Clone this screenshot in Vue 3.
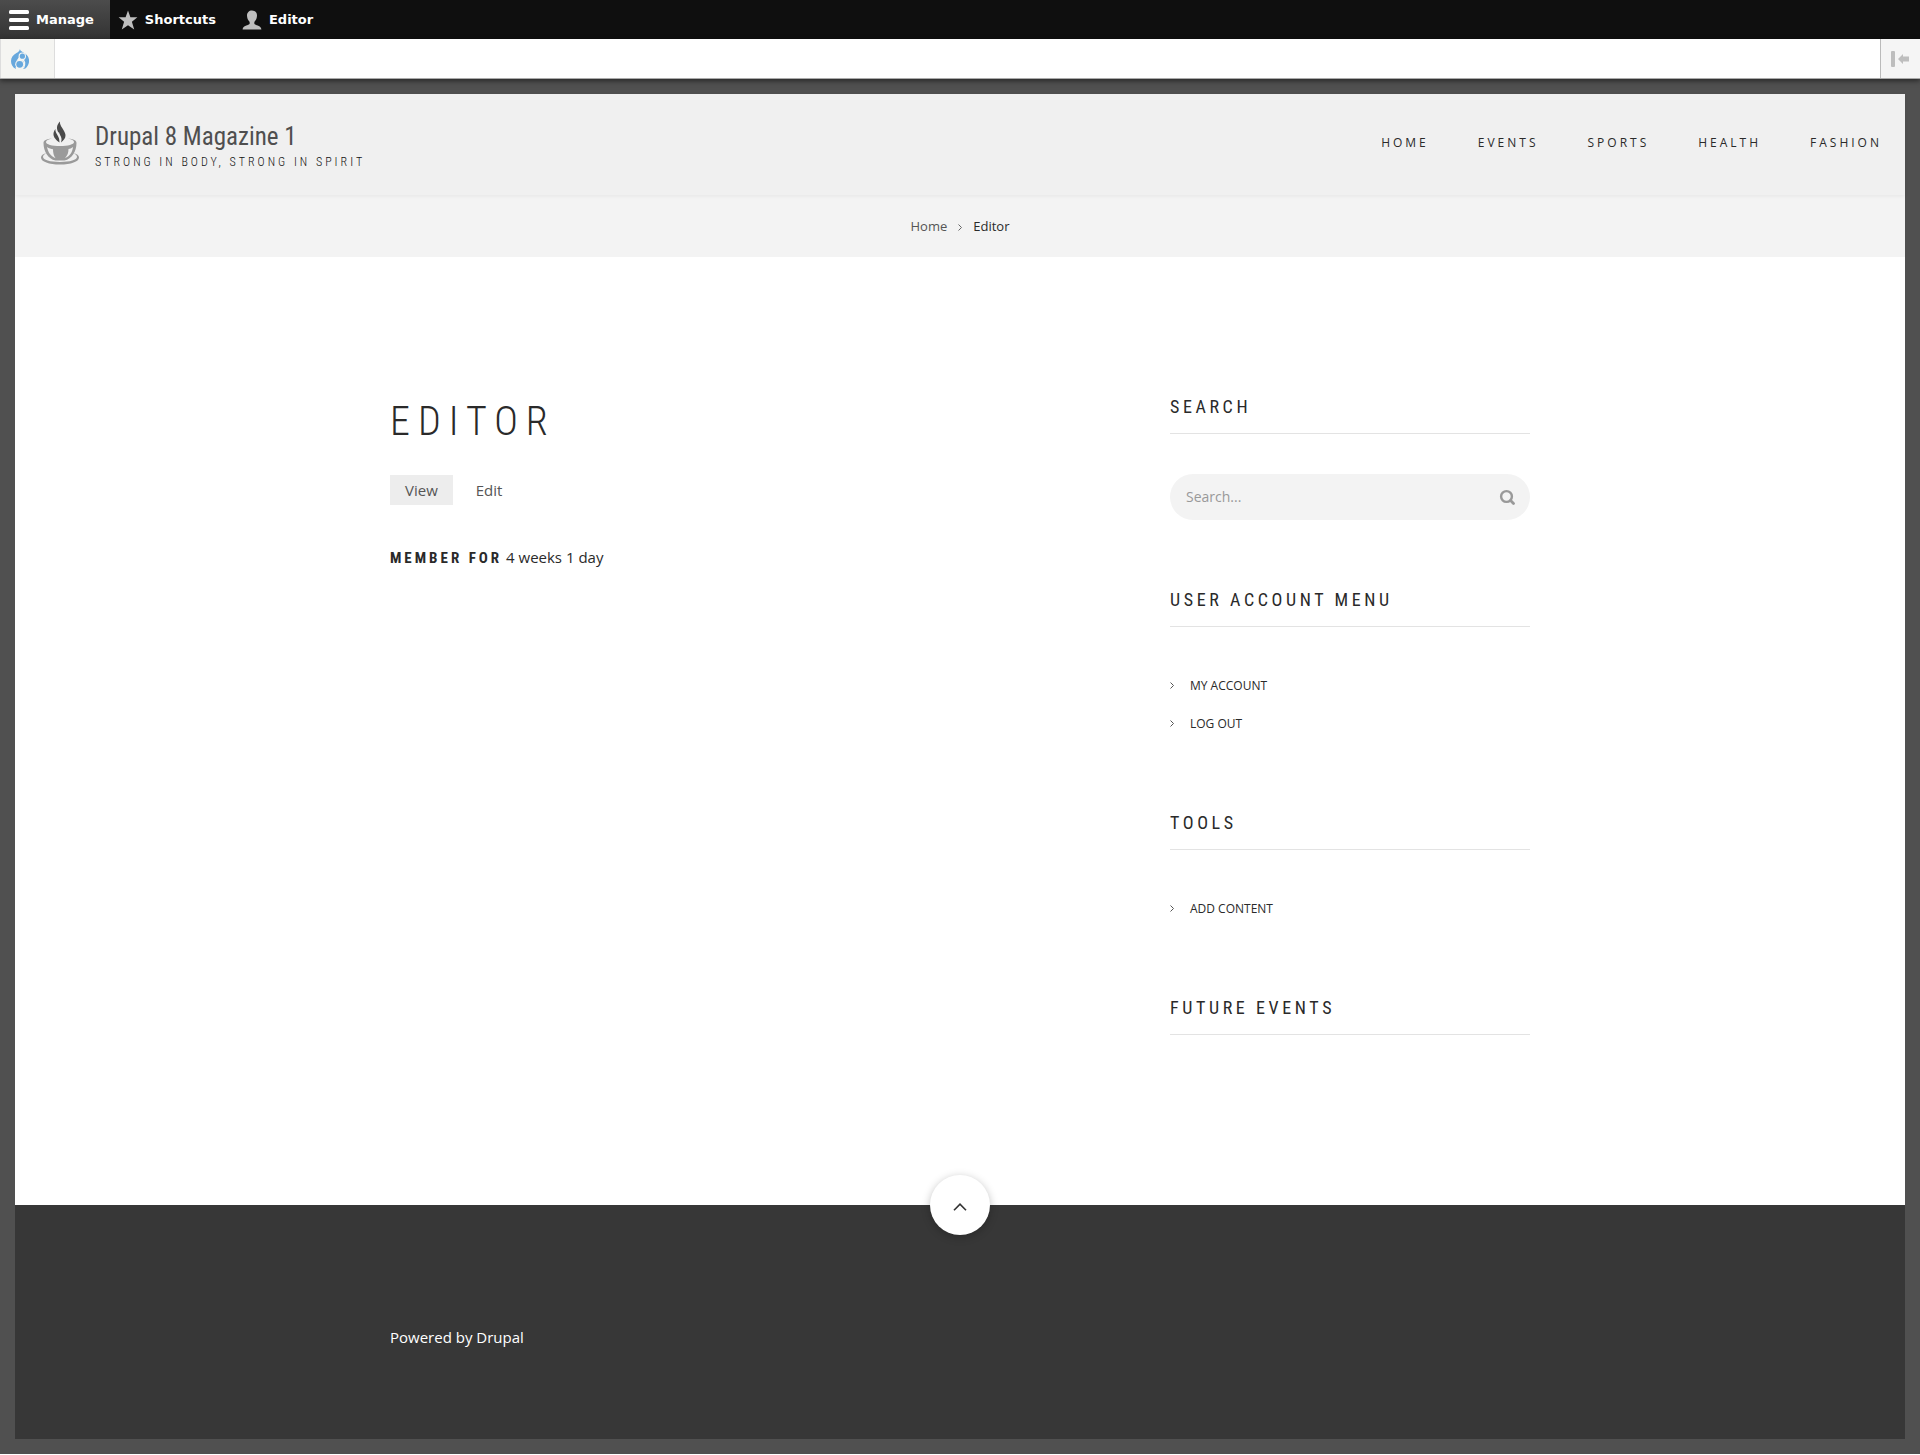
<script setup>
import { ref } from 'vue'

const search = ref('')
const navItems = ['Home', 'Events', 'Sports', 'Health', 'Fashion']
const menus = [
  { title: 'User account menu', links: ['My account', 'Log out'] },
  { title: 'Tools', links: ['Add content'] },
]
const toTop = () => window.scrollTo({ top: 0, behavior: 'smooth' })
</script>

<template>
  <div class="page">
    <nav class="toolbar" aria-label="Administration toolbar">
      <a class="tool manage" href="#">
        <svg width="20" height="20" viewBox="0 0 20 20" fill="#fff">
          <rect y="0" width="20" height="4" rx="1.5" />
          <rect y="8" width="20" height="4" rx="1.5" />
          <rect y="16" width="20" height="4" rx="1.5" />
        </svg>
        Manage
      </a>
      <a class="tool" href="#">
        <svg width="20" height="20" viewBox="0 0 20 20" fill="#bebebe">
          <path d="M10 .5l2.400 6.800h7l-5.500 4.400 2.300 7.800L10 15.200l-6.200 4.300 2.300-7.800L.600 7.300h7z" />
        </svg>
        Shortcuts
      </a>
      <a class="tool" href="#">
        <svg width="20" height="20" viewBox="0 0 20 20" fill="#bebebe">
          <path d="M10 .5c3 0 5 2.100 5 5 0 2.600-1 4.600-2.200 5.800-.7.7-.8 2.700.3 3.300 1.700.9 6 1.500 6.300 4.900H.6C.9 16.100 5.200 15.500 6.900 14.600c1.100-.6 1-2.600.3-3.300C6 10.100 5 8.100 5 5.500c0-2.900 2-5 5-5z" />
        </svg>
        Editor
      </a>
    </nav>

    <div class="tray">
      <a class="tray-home" href="#" aria-label="Drupal">
        <svg width="18" height="20" viewBox="0 0 18 20">
          <path fill="#68a8dd" d="M8.900 0c.3 1.300 1.200 2.100 2.700 3C15.500 5 18.100 7.500 18.100 12c0 3-1.500 6-4.100 7.800H4.500C1.700 18.400 0 15.300 0 12 0 8.200 2.300 5.700 5.500 4 7.500 2.900 8.700 2 8.900 0z" />
          <g fill="#f5f5f2">
            <circle cx="11.300" cy="7.200" r="3.700" />
            <circle cx="8.700" cy="15.300" r="4.500" />
            <path d="M8 8L5.500 11.800h6L14 10zM4.600 18h8.200l-.6 2H4.900z" />
          </g>
          <path d="M11 10.500c2.600.8 3.600 4 1.500 8.500" fill="none" stroke="#f5f5f2" stroke-width="1.400" />
          <g fill="#68a8dd">
            <circle cx="11.400" cy="7.200" r="2.600" />
            <circle cx="8.700" cy="15.300" r="3.400" />
          </g>
        </svg>
      </a>
      <button class="tray-toggle" type="button" aria-label="Vertical orientation">
        <svg width="20" height="16" viewBox="0 0 20 16" fill="#bebebe">
          <rect x="1" width="4" height="16" rx="1" />
          <path d="M8 8l5-5v2.500h6v5h-6V13z" />
        </svg>
      </button>
    </div>

    <div class="site">
      <header class="header">
        <a class="brand" href="#">
          <svg width="40" height="46" viewBox="0 0 40 46">
            <g fill="#4a4a4a">
              <path d="M20 .5c-.8 4.500 5 8.500 5.500 13.500.2 3-1.700 5.300-4.500 7.500 1.500-4-.2-6.500-2.200-9.500C16 8 16.500 4 20 .5z" />
              <path d="M15.500 8c-1 4 4.800 7.500 4 13.500-2.500-1.800-6.500-5-6-9 .2-1.900.9-3.300 2-4.500z" />
            </g>
            <path d="M18.700 11.500c-.2 3 2 5.500 1.500 9" fill="none" stroke="#f0f0f0" />
            <g fill="#9a9a9a">
              <path d="M12 17.500C8 18.300 6 19.500 6 21c0 2.500 6 4 14 4s14-1.500 14-4c0-1.500-2-2.700-6-3.500 5.500.3 8.500 2 8.500 4.500 0 8-4.500 16-12 17.500h-9C8 38 3.500 30 3.500 22c0-2.500 3-4.200 8.500-4.500z" />
              <path d="M7 32c-4 .8-6 2.300-6 4.500 0 4.300 8 7 19 7s19-2.700 19-7c0-2.200-2-3.700-6-4.500 2.500 1 4 2.200 4 3.800 0 3.200-7 5.200-17 5.200S3 39 3 35.800C3 34.200 4.500 33 7 32z" />
            </g>
            <path d="M7 26c2 1.500 4 2 6 2.300 0 3.500.8 6.500 2.500 9C10.500 35 8 31 7 26zM33 26c-1.500 1.300-3 1.800-4.500 2 0 3.500-1 6.500-3.500 9 5-2 7.500-6 8-11z" fill="#f0f0f0" />
          </svg>
          <span class="brand-text">
            <span class="site-name">Drupal 8 Magazine 1</span>
            <span class="slogan">Strong in body, strong in spirit</span>
          </span>
        </a>
        <nav class="nav" aria-label="Main navigation">
          <a v-for="item in navItems" :key="item" href="#">{{ item }}</a>
        </nav>
      </header>

      <nav class="breadcrumb" aria-label="Breadcrumb">
        <a href="#">Home</a>
        <svg width="4" height="9" viewBox="0 0 4 9" fill="none" stroke="#666"><path d="M.5 2.500L3.500 5.500.500 8.500" /></svg>
        <span>Editor</span>
      </nav>

      <div class="container content">
        <main>
          <h1>Editor</h1>
          <nav class="tabs" aria-label="Tabs">
            <a class="active" href="#">View</a>
            <a href="#">Edit</a>
          </nav>
          <p class="member"><strong>Member for</strong> 4 weeks 1 day</p>
        </main>

        <aside class="sidebar">
          <section>
            <h2><label for="search">Search</label></h2>
            <form class="search" @submit.prevent>
              <input id="search" v-model="search" type="text" placeholder="Search..." />
              <button type="submit" aria-label="Search">
                <svg width="16" height="16" viewBox="0 0 16 16" fill="none" stroke="#999" stroke-linecap="round">
                  <circle cx="7.500" cy="7.500" r="5.400" stroke-width="2.400" />
                  <path d="M11.600 11.600L14.500 14.500" stroke-width="2.800" />
                </svg>
              </button>
            </form>
          </section>
          <section v-for="menu in menus" :key="menu.title">
            <h2>{{ menu.title }}</h2>
            <ul>
              <li v-for="link in menu.links" :key="link">
                <svg width="4" height="7" viewBox="0 0 4 7" fill="none" stroke="#555"><path d="M.5.500L3.500 3.500.500 6.500" /></svg>
                <a href="#">{{ link }}</a>
              </li>
            </ul>
          </section>
          <section>
            <h2>Future events</h2>
          </section>
        </aside>
      </div>

      <footer class="footer">
        <button class="to-top" type="button" aria-label="Back to top" @click="toTop">
          <svg width="14" height="8" viewBox="0 0 14 8" fill="none" stroke="#333" stroke-width="1.600"><path d="M1 7.200L7 1.200l6 6" /></svg>
        </button>
        <div class="container">Powered by <a href="#">Drupal</a></div>
      </footer>
    </div>
  </div>
</template>

<style>
body {
  margin: 0;
}
</style>

<style scoped>
* {
  box-sizing: border-box;
}
.page {
  background: #505050;
  color: #2a2a2a;
  font: 15px/25px "Open Sans", sans-serif;
}
a {
  color: inherit;
  text-decoration: none;
}
svg {
  display: block;
  flex: none;
}
button {
  padding: 0;
  border: 0;
  cursor: pointer;
}
h1,
h2,
p,
ul {
  margin: 0;
  padding: 0;
  font-weight: 400;
}
.toolbar {
  display: flex;
  height: 39px;
  background: #0f0f0f;
  font: bold 13px/20px "DejaVu Sans", sans-serif;
  color: #fff;
}
.tool {
  display: flex;
  align-items: center;
  gap: 7px;
  padding: 0 18px 0 8px;
}
.manage {
  padding: 0 16px 0 9px;
  background: linear-gradient(#4c4c4c, #333);
}
.tray {
  position: relative;
  display: flex;
  justify-content: space-between;
  height: 40px;
  border-bottom: 1px solid #aaa;
  background: #fff;
  box-shadow: 0 2px 5px rgba(0, 0, 0, 0.5);
}
.tray-home {
  display: flex;
  align-items: center;
  width: 55px;
  padding-left: 10px;
  border: solid #ddd;
  border-width: 0 1px;
  background: #f5f5f2;
}
.tray-toggle {
  display: flex;
  align-items: center;
  justify-content: center;
  width: 40px;
  padding-right: 2px;
  border-left: 1px solid #bbb;
  background: #f5f5f5;
}
.site {
  border: 15px solid #505050;
  background: #fff;
}
.header {
  position: relative;
  display: flex;
  align-items: center;
  justify-content: space-between;
  height: 101px;
  padding: 0 23px 4px 25px;
  background: #f0f0f0;
  box-shadow: 0 1px 4px rgba(0, 0, 0, 0.06);
}
.brand {
  display: flex;
  gap: 15px;
  padding-top: 8px;
}
.brand-text {
  display: flex;
  flex-direction: column;
  padding-top: 2px;
  font-family: "Roboto Condensed", "Liberation Sans Narrow", Roboto, sans-serif;
}
.site-name {
  font-size: 25px;
  line-height: 28px;
  color: #4f4f4f;
}
.slogan {
  color: #111;
  font-size: 12px;
  font-weight: 300;
  line-height: 22px;
  letter-spacing: 3px;
  text-transform: uppercase;
}
.nav {
  display: flex;
  gap: 49px;
  font-size: 12px;
  line-height: 20px;
  letter-spacing: 3px;
  text-transform: uppercase;
}
.breadcrumb {
  display: flex;
  align-items: center;
  justify-content: center;
  gap: 11px;
  height: 62px;
  background: #f3f3f3;
  font-size: 13px;
}
.breadcrumb a {
  color: #555;
}
.container {
  max-width: 1140px;
  margin: 0 auto;
}
.content {
  display: grid;
  grid-template-columns: 1fr 360px;
  padding: 140px 0 170px;
}
h1 {
  font: 300 40px/50px "Roboto Condensed", "Liberation Sans Narrow", Roboto, sans-serif;
  letter-spacing: 8px;
  text-transform: uppercase;
}
.tabs {
  display: flex;
  gap: 8px;
  margin-top: 28px;
  color: #555;
}
.tabs a {
  padding: 0 15px;
  line-height: 30px;
}
.tabs .active {
  background: #ededed;
}
.member {
  margin-top: 40px;
}
.member strong {
  font-family: "Roboto Condensed", "Liberation Sans Narrow", Roboto, sans-serif;
  letter-spacing: 3px;
  text-transform: uppercase;
}
.sidebar {
  display: flex;
  flex-direction: column;
  gap: 70px;
}
h2 {
  padding-bottom: 16px;
  border-bottom: 1px solid #e3e3e3;
  font: 400 18px/20px "Roboto Condensed", "Liberation Sans Narrow", Roboto, sans-serif;
  letter-spacing: 0.2em;
  text-transform: uppercase;
}
.search {
  display: flex;
  align-items: center;
  height: 46px;
  margin-top: 40px;
  padding: 0 15px 0 16px;
  border-radius: 23px;
  background: #f3f3f3;
}
.search input {
  flex: 1;
  min-width: 0;
  padding: 0;
  border: 0;
  outline: 0;
  background: none;
  font: 14px/20px "Open Sans", sans-serif;
}
.search input::placeholder {
  color: #999;
}
.search button {
  background: none;
}
ul {
  margin-top: 39px;
  padding-bottom: 1px;
  list-style: none;
}
li {
  display: flex;
  align-items: center;
  gap: 16px;
  height: 38px;
  font-size: 12px;
  text-transform: uppercase;
}
.footer {
  position: relative;
  padding: 120px 0 89px;
  background: #373737;
  color: #fff;
}
.to-top {
  position: absolute;
  top: -30px;
  left: calc(50% - 30px);
  display: flex;
  align-items: center;
  justify-content: center;
  width: 60px;
  height: 60px;
  padding-top: 4px;
  border-radius: 50%;
  background: #fff;
  box-shadow: 0 2px 8px rgba(0, 0, 0, 0.25);
}
</style>
